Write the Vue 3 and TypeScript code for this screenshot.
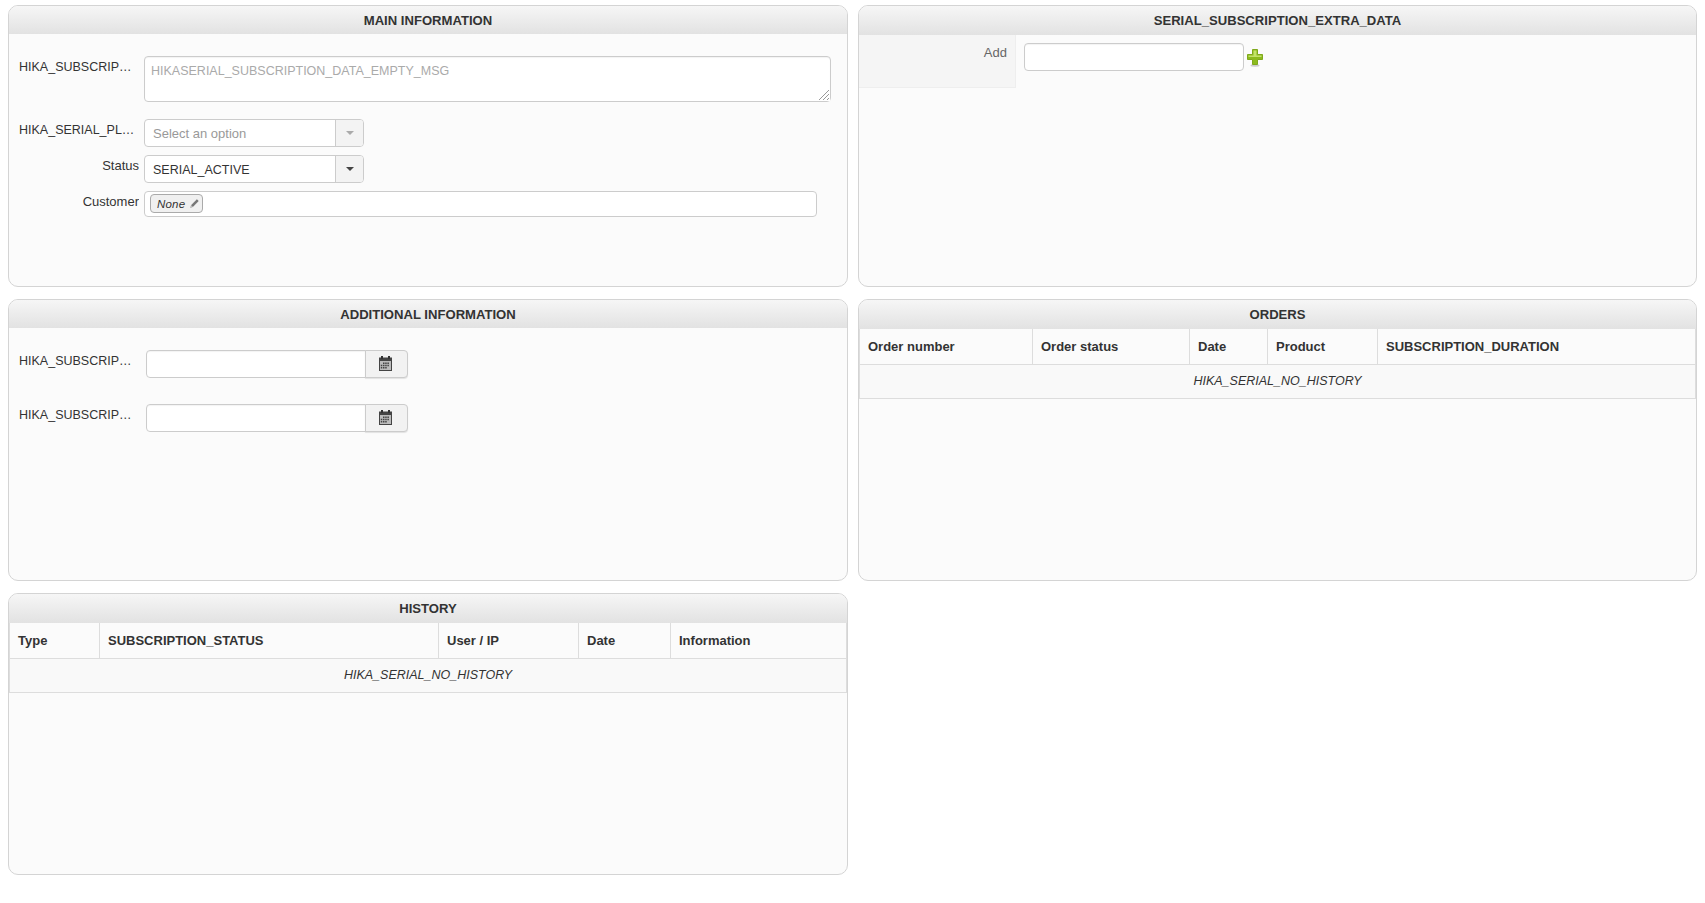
<script setup lang="ts">
interface Col { label: string; cls: string }
const orderCols: Col[] = [
  { label: 'Order number', cls: 'o1' },
  { label: 'Order status', cls: 'o2' },
  { label: 'Date', cls: 'o3' },
  { label: 'Product', cls: 'o4' },
  { label: 'SUBSCRIPTION_DURATION', cls: 'o5' },
]
const historyCols: Col[] = [
  { label: 'Type', cls: 'h1' },
  { label: 'SUBSCRIPTION_STATUS', cls: 'h2' },
  { label: 'User / IP', cls: 'h3' },
  { label: 'Date', cls: 'h4' },
  { label: 'Information', cls: 'h5' },
]
const dates: string[] = ['HIKA_SUBSCRIPTION_START_DATE', 'HIKA_SUBSCRIPTION_END_DATE']
</script>

<template>
  <div class="page">
    <section class="panel">
      <h2 class="head">MAIN INFORMATION</h2>
      <div class="form">
        <div class="row row-text">
          <label class="lbl caps">HIKA_SUBSCRIPTION_DATA</label>
          <div class="area-wrap">
            <textarea class="area" placeholder="HIKASERIAL_SUBSCRIPTION_DATA_EMPTY_MSG"></textarea>
            <svg class="grip" viewBox="0 0 12 12" width="12" height="12">
              <rect width="12" height="12" fill="#fff" />
              <path d="M1 11L11 1M5 11l6-6M9 11l2-2" stroke="#999" stroke-width="1" fill="none" />
            </svg>
          </div>
        </div>
        <div class="row row-sel">
          <label class="lbl caps">HIKA_SERIAL_PLAN</label>
          <div class="select muted">
            <span class="sel-val">Select an option</span>
            <span class="sel-btn"><i class="caret"></i></span>
          </div>
        </div>
        <div class="row row-sel">
          <label class="lbl">Status</label>
          <div class="select">
            <span class="sel-val caps-val">SERIAL_ACTIVE</span>
            <span class="sel-btn"><i class="caret"></i></span>
          </div>
        </div>
        <div class="row">
          <label class="lbl">Customer</label>
          <div class="customer">
            <span class="tag">
              <em>None</em>
              <svg class="pencil" viewBox="0 0 12 12" width="11" height="11">
                <path d="M8.6 1.4l2 2-6.4 6.4-2 -2z" fill="#777" />
                <path d="M2 8.2l1.8 1.8-2.6.8z" fill="#aaa" />
              </svg>
            </span>
          </div>
        </div>
      </div>
    </section>

    <section class="panel">
      <h2 class="head tall">SERIAL_SUBSCRIPTION_EXTRA_DATA</h2>
      <div class="extra">
        <div class="extra-key">Add</div>
        <div class="extra-val">
          <input class="input extra-input" type="text" />
          <svg class="plus" viewBox="0 0 16 18" width="16" height="18">
            <ellipse cx="8" cy="16.5" rx="4.5" ry="1.2" fill="#ccc" />
            <path d="M5.5 .5h5v5h5v5h-5v5h-5v-5h-5v-5h5z" fill="#8cbb1d" stroke="#7fa81c" />
            <path d="M6.5 1.5h3v5h5v1.5h-13v-1.5h5z" fill="#c3e26a" />
          </svg>
        </div>
      </div>
    </section>

    <section class="panel">
      <h2 class="head">ADDITIONAL INFORMATION</h2>
      <div class="form date-form">
        <div v-for="d in dates" :key="d" class="row row-date">
          <label class="lbl caps">{{ d }}</label>
          <div class="date">
            <input class="input date-input" type="text" />
            <button class="cal-btn" type="button">
              <svg viewBox="0 0 13 15" width="13" height="15">
                <rect x="0" y="1.5" width="13" height="13.5" fill="#444" />
                <rect x="2" y="0" width="2" height="3" fill="#333" />
                <rect x="9" y="0" width="2" height="3" fill="#333" />
                <rect x="1" y="5" width="11" height="9" fill="#bbb" />
                <path d="M4 6.5h1.5V8H4zM6.2 6.5h1.5V8H6.2zM8.4 6.5h1.5V8H8.4zM1.8 8.8h1.5v1.5H1.8zM4 8.8h1.5v1.5H4zM6.2 8.8h1.5v1.5H6.2zM8.4 8.8h1.5v1.5H8.4zM1.8 11h1.5v1.5H1.8zM4 11h1.5v1.5H4zM6.2 11h1.5v1.5H6.2z" fill="#444" />
              </svg>
            </button>
          </div>
        </div>
      </div>
    </section>

    <section class="panel">
      <h2 class="head tall">ORDERS</h2>
      <table class="tbl">
        <thead>
          <tr><th v-for="c in orderCols" :key="c.cls" :class="c.cls">{{ c.label }}</th></tr>
        </thead>
        <tbody>
          <tr><td colspan="5"><em>HIKA_SERIAL_NO_HISTORY</em></td></tr>
        </tbody>
      </table>
    </section>

    <section class="panel">
      <h2 class="head tall">HISTORY</h2>
      <table class="tbl">
        <thead>
          <tr><th v-for="c in historyCols" :key="c.cls" :class="c.cls">{{ c.label }}</th></tr>
        </thead>
        <tbody>
          <tr><td colspan="5"><em>HIKA_SERIAL_NO_HISTORY</em></td></tr>
        </tbody>
      </table>
    </section>
  </div>
</template>

<style scoped>
.page {
  display: grid;
  grid-template-columns: 840px 839px;
  grid-auto-rows: 282px;
  column-gap: 10px;
  row-gap: 12px;
  padding: 5px 8px 0;
  font-family: "Liberation Sans", Arial, sans-serif;
  font-size: 13px;
  color: #333;
}
.panel {
  box-sizing: border-box;
  border: 1px solid #d4d4d4;
  border-radius: 10px;
  background: #fbfbfb;
  overflow: hidden;
}
.head {
  margin: 0;
  height: 28px;
  line-height: 30px;
  text-align: center;
  font-size: 13.1px;
  font-weight: bold;
  color: #333;
  background: linear-gradient(to bottom, #f6f6f6, #e2e2e2);
}
.head.tall { height: 29px; }
.form { padding: 22px 0 0 10px; }
.row { display: flex; align-items: flex-start; column-gap: 5px; }
.row-text { margin-bottom: 17px; }
.row-sel { margin-bottom: 8px; }
.lbl {
  box-sizing: border-box;
  flex: none;
  width: 120px;
  padding-top: 2px;
  line-height: 18px;
  text-align: right;
  white-space: nowrap;
  overflow: hidden;
  text-overflow: ellipsis;
  font-size: 13px;
  color: #333;
}
.lbl.caps { font-size: 12.5px; }
.area-wrap { position: relative; width: 687px; height: 46px; }
.area {
  display: block;
  box-sizing: border-box;
  width: 687px;
  height: 46px;
  margin: 0;
  padding: 5px 6px;
  border: 1px solid #ccc;
  border-radius: 4px;
  background: #fff;
  font: 12.5px/18px "Liberation Sans", Arial, sans-serif;
  box-shadow: inset 0 1px 1px rgba(0, 0, 0, .05);
  outline: none;
  resize: none;
}
.area::placeholder { color: #aaa; opacity: 1; }
.grip { position: absolute; right: 1px; bottom: 1px; pointer-events: none; }
.select {
  box-sizing: border-box;
  display: flex;
  width: 220px;
  height: 28px;
  border: 1px solid #ccc;
  border-radius: 4px;
  background: #fff;
  overflow: hidden;
}
.sel-val { flex: 1; padding-left: 8px; line-height: 27px; font-size: 13px; color: #333; }
.sel-val.caps-val { font-size: 12.5px; line-height: 28px; }
.sel-btn {
  flex: none;
  width: 27px;
  display: flex;
  align-items: center;
  justify-content: center;
  background: #f3f3f3;
  border-left: 1px solid #ccc;
}
.caret {
  display: block;
  width: 0;
  height: 0;
  border-left: 4px solid transparent;
  border-right: 4px solid transparent;
  border-top: 4px solid #444;
}
.muted .sel-val { color: #999; }
.muted .caret { border-top-color: #aaa; }
.customer {
  box-sizing: border-box;
  display: flex;
  align-items: flex-start;
  width: 673px;
  height: 26px;
  padding: 2px 5px;
  border: 1px solid #ccc;
  border-radius: 4px;
  background: #fff;
}
.tag {
  box-sizing: border-box;
  display: inline-flex;
  align-items: center;
  column-gap: 4px;
  height: 19px;
  width: 53px;
  padding: 0 4px 0 6px;
  border: 1px solid #aaa;
  border-radius: 4px;
  background: #f0f0f0;
  font-size: 11.5px;
  letter-spacing: .2px;
  color: #333;
}
.pencil { flex: none; }
.date-form .row { column-gap: 7px; }
.row-date { margin-bottom: 26px; }
.date { display: flex; }
.input {
  box-sizing: border-box;
  display: block;
  height: 28px;
  margin: 0;
  padding: 4px 6px;
  border: 1px solid #ccc;
  border-radius: 4px;
  background: #fff;
  box-shadow: inset 0 1px 1px rgba(0, 0, 0, .05);
  outline: none;
}
.date-input { width: 220px; border-radius: 4px 0 0 4px; }
.cal-btn {
  box-sizing: border-box;
  display: flex;
  align-items: center;
  justify-content: center;
  width: 43px;
  height: 28px;
  margin: 0 0 0 -1px;
  padding: 0 2px 2px 0;
  border: 1px solid #ccc;
  border-radius: 0 4px 4px 0;
  background: #f2f2f2;
  box-shadow: 0 1px 1px rgba(0, 0, 0, .1);
}
.extra { display: flex; }
.extra-key {
  box-sizing: border-box;
  flex: none;
  width: 157px;
  height: 53px;
  padding: 9px 8px 0 0;
  line-height: 18px;
  text-align: right;
  color: #666;
  background: #f5f5f5;
  border-right: 1px solid #eee;
  border-bottom: 1px solid #eee;
}
.extra-val {
  display: flex;
  align-items: flex-start;
  column-gap: 3px;
  padding: 8px 0 0 8px;
}
.extra-input { width: 220px; }
.plus { flex: none; margin-top: 6px; }
.tbl {
  width: 100%;
  table-layout: fixed;
  border-collapse: collapse;
  font-size: 13px;
}
.tbl th {
  box-sizing: border-box;
  height: 35px;
  padding: 0 8px;
  text-align: left;
  font-weight: bold;
  background: #fbfbfb;
  border: 1px solid #ddd;
  border-top: 0;
}
.tbl td {
  height: 33px;
  padding: 0;
  text-align: center;
  font-size: 12.5px;
  background: #f9f9f9;
  border: 1px solid #ddd;
}
.o1 { width: 173px; }
.o2 { width: 157px; }
.o3 { width: 78px; }
.o4 { width: 110px; }
.h1 { width: 90px; }
.h2 { width: 339px; }
.h3 { width: 140px; }
.h4 { width: 92px; }
</style>

<style>
html, body { background: #fff; }
</style>
